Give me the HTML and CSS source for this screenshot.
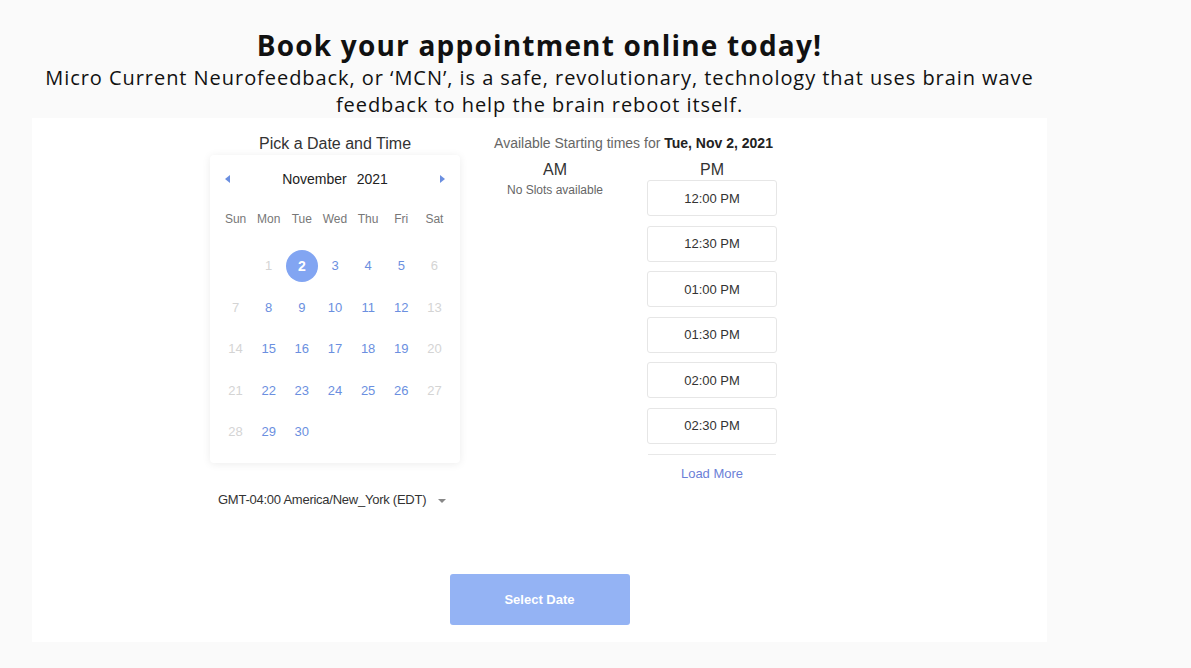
FILE: index.html
```html
<!DOCTYPE html>
<html lang="en">
<head>
  <meta charset="UTF-8" />
  <meta name="viewport" content="width=device-width, initial-scale=1.0" />
  <title>Book your appointment</title>
  <link rel="stylesheet" href="styles.css">
</head>
<body>
  <div class="page">
    <div class="intro">
      <h1>Book your appointment online today!</h1>
      <p>Micro Current Neurofeedback, or ‘MCN’, is a safe, revolutionary, technology that uses brain wave feedback to help the brain reboot itself.</p>
    </div>

    <div class="panel">
      <div class="booking">
        <div class="date-col">
          <div class="col-title">Pick a Date and Time</div>
          <div class="calendar">
            <div class="cal-head">
              <span class="nav prev"></span>
              <span class="month">November <span class="year">2021</span></span>
              <span class="nav next"></span>
            </div>
            <div class="weekdays">
              <span>Sun</span><span>Mon</span><span>Tue</span><span>Wed</span><span>Thu</span><span>Fri</span><span>Sat</span>
            </div>
            <div class="days">
              <span></span><span class="off">1</span><span class="sel">2</span><span>3</span><span>4</span><span>5</span><span class="off">6</span>
              <span class="off">7</span><span>8</span><span>9</span><span>10</span><span>11</span><span>12</span><span class="off">13</span>
              <span class="off">14</span><span>15</span><span>16</span><span>17</span><span>18</span><span>19</span><span class="off">20</span>
              <span class="off">21</span><span>22</span><span>23</span><span>24</span><span>25</span><span>26</span><span class="off">27</span>
              <span class="off">28</span><span>29</span><span>30</span><span></span><span></span><span></span><span></span>
            </div>
          </div>
          <div class="timezone">GMT-04:00 America/New_York (EDT) <span class="caret"></span></div>
        </div>

        <div class="time-col">
          <div class="avail">Available Starting times for <b>Tue, Nov 2, 2021</b></div>
          <div class="slots">
            <div class="half">
              <div class="half-title">AM</div>
              <div class="none">No Slots available</div>
            </div>
            <div class="half">
              <div class="half-title">PM</div>
              <div class="slot">12:00 PM</div>
              <div class="slot">12:30 PM</div>
              <div class="slot">01:00 PM</div>
              <div class="slot">01:30 PM</div>
              <div class="slot">02:00 PM</div>
              <div class="slot">02:30 PM</div>
              <div class="load-more">Load More</div>
            </div>
          </div>
        </div>
      </div>

      <div class="actions">
        <button class="select-btn">Select Date</button>
      </div>
    </div>
  </div>
</body>
</html>
```

FILE: styles.css
```css
body {
  margin: 0;
  background-color: #fafafa;
  font-family: "Liberation Sans", Arial, sans-serif;
  color: #333;
}
.page {
  width: 1015px;
  margin-left: 32px;
  padding-top: 26px;
}
.intro {
  text-align: center;
  font-family: "Open Sans", sans-serif;
  color: #111;
}
.intro h1 {
  margin: 0;
  font-size: 28px;
  line-height: 38px;
  font-weight: 700;
  letter-spacing: 1.2px;
}
.intro p {
  margin: 0;
  font-size: 20px;
  line-height: 27px;
  letter-spacing: 0.95px;
  padding: 0 8px;
}
.panel {
  background-color: #fff;
  padding: 16px 0 17px;
}
.booking {
  display: flex;
  padding-left: 178px;
  gap: 30px;
}
.date-col {
  width: 250px;
}
.col-title {
  text-align: center;
  font-size: 16px;
  line-height: 20px;
  color: #333;
}
.calendar {
  margin-top: 1px;
  padding: 10px 9px;
  border-radius: 4px;
  background-color: #fff;
  box-shadow: 0 1px 8px rgba(0, 0, 0, 0.08);
}
.cal-head {
  height: 28px;
  display: flex;
  align-items: center;
  justify-content: space-between;
  padding: 0 6px;
}
.month {
  font-size: 14px;
  color: #222;
}
.year {
  margin-left: 6px;
}
.nav {
  width: 0;
  height: 0;
  border-top: 4px solid transparent;
  border-bottom: 4px solid transparent;
}
.prev {
  border-right: 5px solid #6b8fe0;
}
.next {
  border-left: 5px solid #6b8fe0;
}
.weekdays, .days {
  display: grid;
  grid-template-columns: repeat(7, 1fr);
}
.weekdays span {
  height: 52px;
  line-height: 52px;
  text-align: center;
  font-size: 12px;
  color: #777;
}
.days span {
  height: 41.5px;
  display: flex;
  align-items: center;
  justify-content: center;
  font-size: 13px;
  color: #6b8fe0;
}
.days .off {
  color: #d4d4d4;
}
.days .sel {
  position: relative;
  isolation: isolate;
  color: #fff;
  font-weight: 700;
  font-size: 14px;
}
.days .sel::before {
  content: "";
  position: absolute;
  width: 32px;
  height: 32px;
  border-radius: 50%;
  background-color: #82a5f2;
  z-index: -1;
}
.timezone {
  margin-top: 29px;
  padding-left: 8px;
  font-size: 13px;
  letter-spacing: -0.25px;
  color: #333;
  display: flex;
  align-items: center;
}
.caret {
  margin-left: 12px;
  margin-top: 3px;
  width: 0;
  height: 0;
  border-left: 4px solid transparent;
  border-right: 4px solid transparent;
  border-top: 4px solid #888;
}
.time-col {
  width: 287px;
}
.avail {
  font-size: 14px;
  line-height: 18px;
  color: #666;
  text-align: center;
}
.avail b {
  color: #222;
}
.slots {
  display: flex;
  gap: 27px;
  margin-top: 8px;
}
.half {
  width: 130px;
  display: flex;
  flex-direction: column;
  align-items: center;
}
.half-title {
  font-size: 16px;
  line-height: 20px;
  color: #333;
}
.none {
  font-size: 12px;
  color: #666;
  line-height: 20px;
}
.slot {
  box-sizing: border-box;
  width: 130px;
  height: 36px;
  margin-bottom: 9.6px;
  border: 1px solid #e6e6e6;
  border-radius: 3px;
  display: flex;
  align-items: center;
  justify-content: center;
  font-size: 13px;
  color: #333;
}
.load-more {
  width: 128px;
  border-top: 1px solid #e8e8e8;
  padding-top: 10px;
  text-align: center;
  font-size: 13px;
  line-height: 18px;
  color: #6b7fd7;
}
.actions {
  display: flex;
  justify-content: center;
  margin-top: 67px;
}
.select-btn {
  width: 180px;
  height: 51px;
  border: none;
  border-radius: 3px;
  background-color: #94b3f4;
  color: #fff;
  font-family: "Liberation Sans", Arial, sans-serif;
  font-size: 13px;
  font-weight: 700;
}
```
